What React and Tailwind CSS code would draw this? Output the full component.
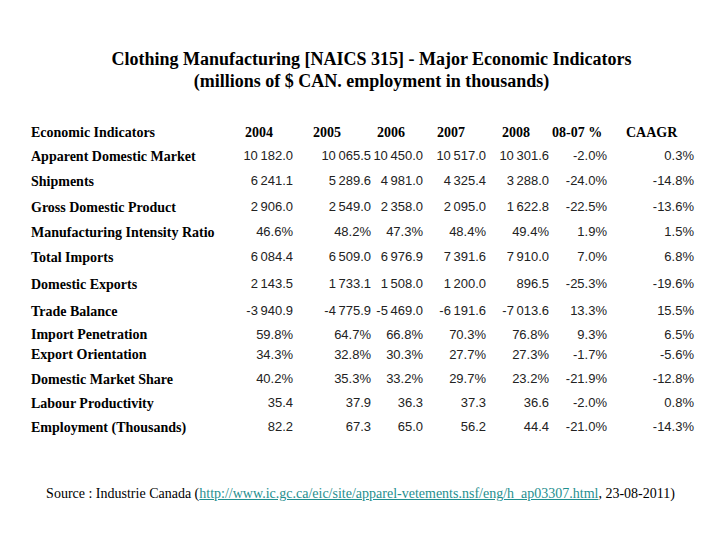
import React from "react";

const rows = [
  { label: "Apparent Domestic Market", h: "h-[24px]", v: ["10 182.0", "10 065.5", "10 450.0", "10 517.0", "10 301.6", "-2.0%", "0.3%"] },
  { label: "Shipments", h: "h-[26px]", v: ["6 241.1", "5 289.6", "4 981.0", "4 325.4", "3 288.0", "-24.0%", "-14.8%"] },
  { label: "Gross Domestic Product", h: "h-[26px]", v: ["2 906.0", "2 549.0", "2 358.0", "2 095.0", "1 622.8", "-22.5%", "-13.6%"] },
  { label: "Manufacturing Intensity Ratio", h: "h-[24px]", v: ["46.6%", "48.2%", "47.3%", "48.4%", "49.4%", "1.9%", "1.5%"] },
  { label: "Total Imports", h: "h-[26px]", v: ["6 084.4", "6 509.0", "6 976.9", "7 391.6", "7 910.0", "7.0%", "6.8%"] },
  { label: "Domestic Exports", h: "h-[28px]", v: ["2 143.5", "1 733.1", "1 508.0", "1 200.0", "896.5", "-25.3%", "-19.6%"] },
  { label: "Trade Balance", h: "h-[26px]", v: ["-3 940.9", "-4 775.9", "-5 469.0", "-6 191.6", "-7 013.6", "13.3%", "15.5%"] },
  { label: "Import Penetration", h: "h-[20px]", v: ["59.8%", "64.7%", "66.8%", "70.3%", "76.8%", "9.3%", "6.5%"] },
  { label: "Export Orientation", h: "h-[19px]", v: ["34.3%", "32.8%", "30.3%", "27.7%", "27.3%", "-1.7%", "-5.6%"] },
  { label: "Domestic Market Share", h: "h-[24px]", v: ["40.2%", "35.3%", "33.2%", "29.7%", "23.2%", "-21.9%", "-12.8%"] },
  { label: "Labour Productivity", h: "h-[24px]", v: ["35.4", "37.9", "36.3", "37.3", "36.6", "-2.0%", "0.8%"] },
  { label: "Employment (Thousands)", h: "h-[24px]", v: ["82.2", "67.3", "65.0", "56.2", "44.4", "-21.0%", "-14.3%"] },
];

const headers = [
  { t: "2004", pl: "pl-[10px]" },
  { t: "2005", pl: "pl-[20px]" },
  { t: "2006", pl: "pl-[6px]" },
  { t: "2007", pl: "pl-[14px]" },
  { t: "2008", pl: "pl-[16px]" },
  { t: "08-07 %", pl: "pl-[3px]" },
  { t: "CAAGR", pl: "pl-[19px]" },
];

const grid = "grid grid-cols-[204px_58px_78px_52px_63px_63px_58px_87px] items-center";
const serif = "font-['Liberation_Serif','Times_New_Roman',serif]";
const sans = "font-['Liberation_Sans',Arial,sans-serif]";

export default function App() {
  return (
    <div className="w-[720px] h-[540px] bg-white text-black overflow-hidden">
      <div className={`${serif} font-bold text-[18px] leading-[22px] text-center pt-[48px] pl-[23px]`}>
        <div>Clothing Manufacturing [NAICS 315] - Major Economic Indicators</div>
        <div>(millions of $ CAN. employment in thousands)</div>
      </div>
      <div className="pl-[31px] pt-[28px]">
        <div className={`${grid} h-[24px]`}>
          <div className={`${serif} font-bold text-[14px]`}>Economic Indicators</div>
          {headers.map((h) => (
            <div key={h.t} className={`${serif} font-bold text-[14px] ${h.pl} whitespace-nowrap`}>{h.t}</div>
          ))}
        </div>
        {rows.map((r, i) => (
          <div key={r.label} className={`${grid} ${r.h} ${i === 9 ? "mt-[4px]" : ""}`}>
            <div className={`${serif} font-bold text-[14px] whitespace-nowrap`}>{r.label}</div>
            {r.v.map((x, j) => (
              <div key={j} className={`${sans} text-[13px] text-[#222] text-right whitespace-nowrap`}>
                {x.replace(/ /g, "\u2009")}
              </div>
            ))}
          </div>
        ))}
      </div>
      <div className={`${serif} text-[14px] text-center mt-[44px] pl-[1px] whitespace-nowrap`}>
        Source : Industrie Canada (
        <span className="text-[#1f8f8f] underline">http://www.ic.gc.ca/eic/site/apparel-vetements.nsf/eng/h_ap03307.html</span>
        , 23-08-2011)
      </div>
    </div>
  );
}
